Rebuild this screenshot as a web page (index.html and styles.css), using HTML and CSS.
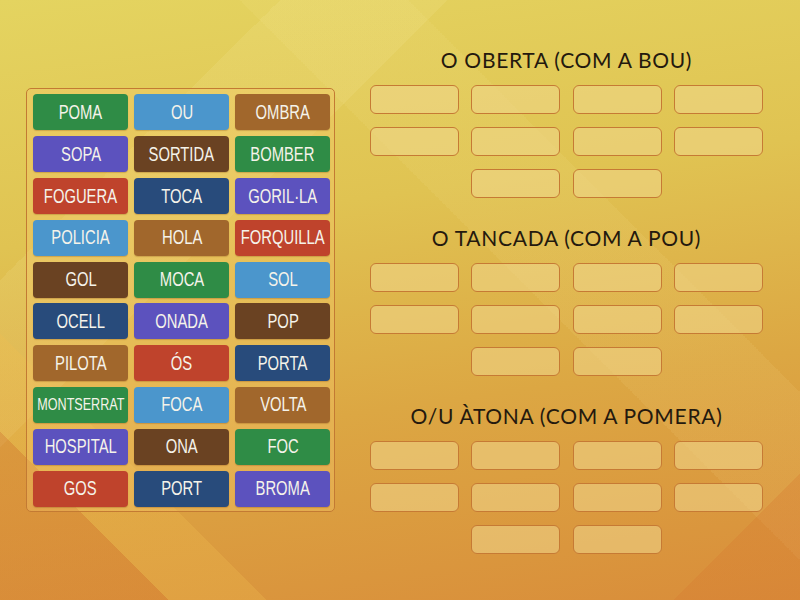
FILE: index.html
```html
<!DOCTYPE html>
<html lang="ca">
<head>
<meta charset="utf-8">
<title>Classifica les paraules</title>
<link rel="stylesheet" href="styles.css">
</head>
<body>
<main class="stage">
  <section class="bank">
    <div class="tile green"><span>POMA</span></div>
    <div class="tile sky"><span>OU</span></div>
    <div class="tile tan"><span>OMBRA</span></div>

    <div class="tile violet"><span>SOPA</span></div>
    <div class="tile cocoa"><span>SORTIDA</span></div>
    <div class="tile green"><span>BOMBER</span></div>

    <div class="tile red"><span>FOGUERA</span></div>
    <div class="tile navy"><span>TOCA</span></div>
    <div class="tile violet"><span>GORIL·LA</span></div>

    <div class="tile sky"><span>POLICIA</span></div>
    <div class="tile tan"><span>HOLA</span></div>
    <div class="tile red"><span>FORQUILLA</span></div>

    <div class="tile cocoa"><span>GOL</span></div>
    <div class="tile green"><span>MOCA</span></div>
    <div class="tile sky"><span>SOL</span></div>

    <div class="tile navy"><span>OCELL</span></div>
    <div class="tile violet"><span>ONADA</span></div>
    <div class="tile cocoa"><span>POP</span></div>

    <div class="tile tan"><span>PILOTA</span></div>
    <div class="tile red"><span>ÓS</span></div>
    <div class="tile navy"><span>PORTA</span></div>

    <div class="tile green tile-long"><span>MONTSERRAT</span></div>
    <div class="tile sky"><span>FOCA</span></div>
    <div class="tile tan"><span>VOLTA</span></div>

    <div class="tile violet"><span>HOSPITAL</span></div>
    <div class="tile cocoa"><span>ONA</span></div>
    <div class="tile green"><span>FOC</span></div>

    <div class="tile red"><span>GOS</span></div>
    <div class="tile navy"><span>PORT</span></div>
    <div class="tile violet"><span>BROMA</span></div>
  </section>

  <section class="groups">
    <div class="group">
      <h2 class="group-title">O OBERTA (COM A BOU)</h2>
      <div class="slots">
        <div class="slot"></div><div class="slot"></div><div class="slot"></div><div class="slot"></div>
        <div class="slot"></div><div class="slot"></div><div class="slot"></div><div class="slot"></div>
        <div class="slot"></div><div class="slot"></div>
      </div>
    </div>
    <div class="group">
      <h2 class="group-title">O TANCADA (COM A POU)</h2>
      <div class="slots">
        <div class="slot"></div><div class="slot"></div><div class="slot"></div><div class="slot"></div>
        <div class="slot"></div><div class="slot"></div><div class="slot"></div><div class="slot"></div>
        <div class="slot"></div><div class="slot"></div>
      </div>
    </div>
    <div class="group">
      <h2 class="group-title">O/U ÀTONA (COM A POMERA)</h2>
      <div class="slots">
        <div class="slot"></div><div class="slot"></div><div class="slot"></div><div class="slot"></div>
        <div class="slot"></div><div class="slot"></div><div class="slot"></div><div class="slot"></div>
        <div class="slot"></div><div class="slot"></div>
      </div>
    </div>
  </section>
</main>
</body>
</html>
```
FILE: styles.css
```css
html, body {
  margin: 0;
  height: 100%;
}

body {
  overflow: hidden;
  font-family: "Lato", "Liberation Sans", sans-serif;
  background:
    /* soft light streaks across the backdrop */
    linear-gradient(45deg, rgba(214,120,48,0.35) 0 12%, rgba(240,190,80,0.28) 12% 19%, rgba(255,255,255,0) 19%),
    linear-gradient(135deg, rgba(255,255,255,0) 0 20%, rgba(255,246,190,0.10) 20% 32%, rgba(255,255,255,0) 32%),
    linear-gradient(315deg, rgba(214,120,48,0.30) 0 9%, rgba(255,255,255,0) 9%),
    linear-gradient(225deg, rgba(255,255,255,0) 0 28%, rgba(255,240,170,0.08) 28% 40%, rgba(255,255,255,0) 40%),
    linear-gradient(172deg, #e4d460 0%, #e0c352 35%, #dca743 65%, #d98d3a 100%);
}

.stage {
  height: 600px;
  display: flex;
  align-items: center;
  padding-left: 26px;
  gap: 34px;
}

/* word bank */
.bank {
  display: grid;
  grid-template-columns: repeat(3, 95.3px);
  grid-auto-rows: 36px;
  column-gap: 5.8px;
  row-gap: 5.8px;
  padding: 5px 4px 4px 6px;
  border: 1px solid #c37a33;
  border-radius: 5px;
  background: rgba(245, 200, 110, 0.35);
}

.tile {
  display: flex;
  align-items: center;
  justify-content: center;
  border-radius: 4px;
  color: #f5f3ea;
  font-family: "Liberation Sans", "Arimo", sans-serif;
  font-size: 20px;
  white-space: nowrap;
  box-shadow: 0 1px 1px rgba(120, 60, 10, 0.25);
}

.tile span {
  display: inline-block;
  transform: scaleX(0.74);
}

.tile-long {
  font-size: 17px;
}

.green  { background: #2f8c46; }
.sky    { background: #4b96cc; }
.tan    { background: #a1672c; }
.violet { background: #5c52be; }
.cocoa  { background: #6a4222; }
.red    { background: #bf432c; }
.navy   { background: #284b7b; }

/* drop targets */
.groups {
  display: flex;
  flex-direction: column;
  gap: 26px;
  width: 394px;
}

.group-title {
  margin: 0 0 9px;
  height: 30px;
  line-height: 28px;
  text-align: center;
  font-family: "Lato", sans-serif;
  font-weight: 400;
  font-size: 21px;
  letter-spacing: 0.7px;
  color: #24190e;
}

.slots {
  display: flex;
  flex-wrap: wrap;
  justify-content: center;
  column-gap: 12.5px;
  row-gap: 13px;
}

.slot {
  width: 87px;
  height: 27px;
  border: 1px solid #c67a34;
  border-radius: 6px;
  background: rgba(240, 215, 140, 0.55);
}
```
